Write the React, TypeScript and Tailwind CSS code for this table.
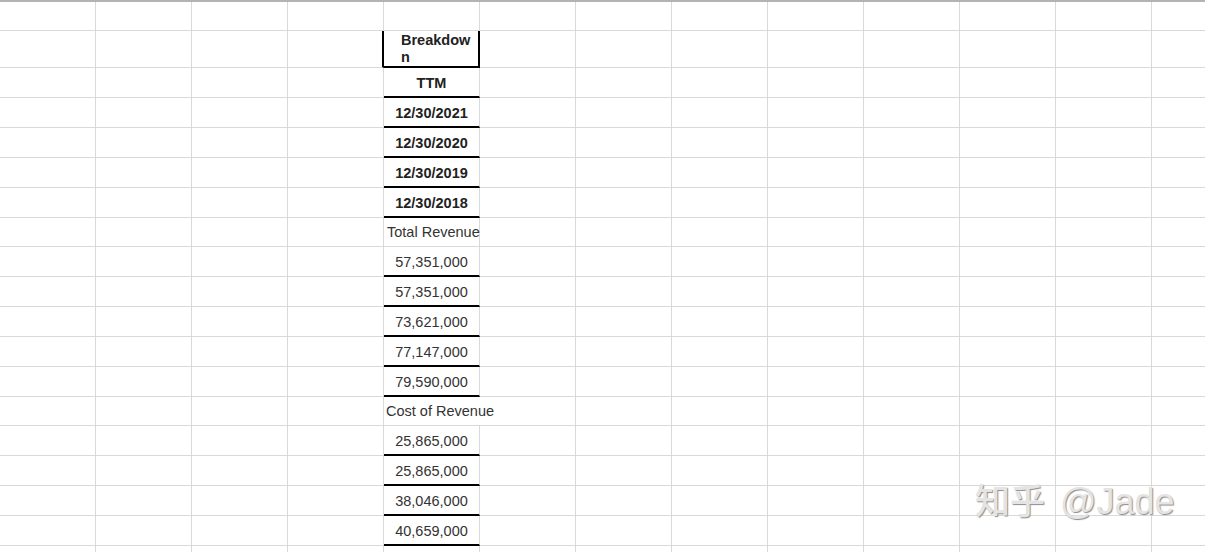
const COLS = 13;
const DATA_COL = 4;

type Row = {
  h: string;
  text?: string;
  kind?: 'header' | 'bold' | 'label' | 'value' | 'empty';
  overflow?: boolean;
};

const rows: Row[] = [
  { h: 'h-[29px]', kind: 'empty' },
  { h: 'h-[37px]', text: 'Breakdown', kind: 'header' },
  { h: 'h-[30px]', text: 'TTM', kind: 'bold' },
  { h: 'h-[30px]', text: '12/30/2021', kind: 'bold' },
  { h: 'h-[30px]', text: '12/30/2020', kind: 'bold' },
  { h: 'h-[30px]', text: '12/30/2019', kind: 'bold' },
  { h: 'h-[30px]', text: '12/30/2018', kind: 'bold' },
  { h: 'h-[29px]', text: 'Total Revenue', kind: 'label' },
  { h: 'h-[30px]', text: '57,351,000', kind: 'value' },
  { h: 'h-[30px]', text: '57,351,000', kind: 'value' },
  { h: 'h-[30px]', text: '73,621,000', kind: 'value' },
  { h: 'h-[30px]', text: '77,147,000', kind: 'value' },
  { h: 'h-[30px]', text: '79,590,000', kind: 'value' },
  { h: 'h-[29px]', text: 'Cost of Revenue', kind: 'label', overflow: true },
  { h: 'h-[30px]', text: '25,865,000', kind: 'value' },
  { h: 'h-[30px]', text: '25,865,000', kind: 'value' },
  { h: 'h-[30px]', text: '38,046,000', kind: 'value' },
  { h: 'h-[30px]', text: '40,659,000', kind: 'value' },
  { h: 'h-[30px]', kind: 'empty' },
];

function DataCell({ row }: { row: Row }) {
  if (row.kind === 'header') {
    return (
      <div className="w-[96px] shrink-0 h-full border-r-2 border-b-2 border-black flex items-center pl-[17px] pr-[4px] pt-px">
        <span className="font-bold text-[14.5px] leading-[17px] break-all text-[#222]">{row.text}</span>
      </div>
    );
  }
  if (row.kind === 'bold') {
    return (
      <div className="w-[96px] shrink-0 h-full border-r border-r-[#d9d9d9] border-b-2 border-b-black flex items-center justify-center pt-[3px]">
        <span className="font-bold text-[14.5px] text-[#222]">{row.text}</span>
      </div>
    );
  }
  if (row.kind === 'value') {
    return (
      <div className="w-[96px] shrink-0 h-full border-r border-r-[#d9d9d9] border-b-2 border-b-black flex items-center justify-center pt-[3px]">
        <span className="text-[14.5px] text-[#333]">{row.text}</span>
      </div>
    );
  }
  if (row.kind === 'label') {
    return (
      <div
        className={
          row.overflow
            ? 'w-[96px] shrink-0 h-full border-b border-[#d9d9d9] flex items-center pl-[2px] pt-[2px] relative z-10'
            : 'w-[96px] shrink-0 h-full border-r border-b border-[#d9d9d9] flex items-center pl-[3px] pt-[2px]'
        }
      >
        <span className="text-[14.5px] text-[#333] whitespace-nowrap">{row.text}</span>
      </div>
    );
  }
  return <div className="w-[96px] shrink-0 h-full border-r border-b border-[#d9d9d9]" />;
}

export default function App() {
  return (
    <div className="relative w-[1205px] h-[552px] overflow-hidden bg-white font-['Liberation_Sans',Arial,sans-serif] border-t-2 border-t-[#b3b3b3]">
      {rows.map((row, ri) => (
        <div key={ri} className={`flex ${row.h}`}>
          {Array.from({ length: COLS }).map((_, ci) => {
            if (ci === DATA_COL) return <DataCell key={ci} row={row} />;
            const blackRight = ci === DATA_COL - 1 && row.kind === 'header';
            return (
              <div
                key={ci}
                className={
                  blackRight
                    ? 'w-[96px] shrink-0 h-full border-r-2 border-r-black border-b border-b-[#d9d9d9]'
                    : 'w-[96px] shrink-0 h-full border-r border-b border-[#d9d9d9]'
                }
              />
            );
          })}
        </div>
      ))}

      <div className="absolute left-[975px] top-[477px] flex items-baseline leading-[46px] font-medium text-[#e4e4e4] [text-shadow:1px_1px_1px_#8c8c8c] whitespace-nowrap font-['Liberation_Sans','Noto_Sans_CJK_SC',sans-serif]">
        <span className="text-[35px]">知乎</span>
        <span className="text-[36px] ml-[15px]">@Jade</span>
      </div>
    </div>
  );
}
